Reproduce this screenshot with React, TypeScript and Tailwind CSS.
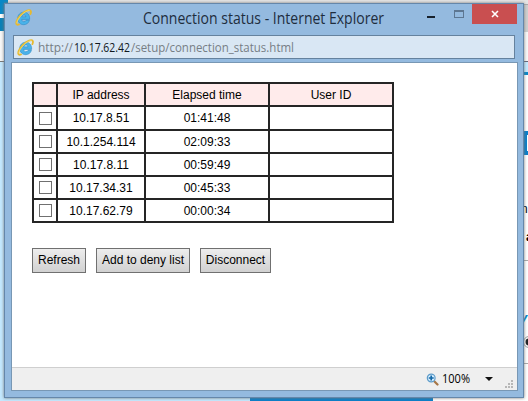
import React from "react";

const connections = [
  { ip: "10.17.8.51", time: "01:41:48" },
  { ip: "10.1.254.114", time: "02:09:33" },
  { ip: "10.17.8.11", time: "00:59:49" },
  { ip: "10.17.34.31", time: "00:45:33" },
  { ip: "10.17.62.79", time: "00:00:34" },
];

function IELogo({ size }: { size: number }) {
  return (
    <svg width={size} height={size} viewBox="0 0 18 18" fill="none" className="shrink-0">
      <path d="M15.300 12C14.500 14.800 12.200 16.600 9.300 16.600 5.500 16.600 2.800 13.800 2.800 10.100 2.800 6.300 5.600 3.400 9.300 3.400c4 0 6.500 3 6.200 7.600H7.100c.1 1.600 1 2.500 2.400 2.500 1.100 0 1.800-.5 2.200-1.500zM7.200 8.300h4.400C11.400 7 10.600 6.300 9.400 6.300 8.200 6.300 7.400 7.100 7.200 8.300z" fill="#49b3ea" stroke="#2a86c2" strokeWidth=".6" />
      <path d="M4.200 16.300C.7 17.800.400 14.400 3.300 9.800 6.600 4.600 13.400.2 16 1.400c1.200.6 1.100 2.200.3 4" stroke="#e6b92f" strokeWidth="1.900" strokeLinecap="round" />
      <path d="M2 15.200C1.800 13.500 3.600 10 7 6.300 10 3.300 13.500 1.500 15.400 1.600" stroke="#fbe98c" strokeWidth=".6" />
    </svg>
  );
}

function BackgroundPage() {
  return (
    <div className="flex h-full flex-col">
      <div className="flex h-[398px] justify-between bg-[#e5e5e5]">
        <div className="flex w-2 flex-col">
          <div className="h-3.5 bg-[#0788c8]" />
          <div className="h-1 bg-white" />
          <div className="h-[13px] bg-[#0880b8]" />
          <div className="h-[30px] bg-[#f8f8f8]" />
          <div className="h-px bg-[#777]" />
          <div className="grow bg-[#c4e9ff]" />
        </div>
        <div className="flex w-[5px] flex-col overflow-hidden text-[12px] leading-[14px]">
          <div className="h-1 bg-[#e5e5e5]" />
          <div className="h-px bg-[#aaa]" />
          <div className="h-[27px] bg-[#cfcfcf]" />
          <div className="h-[29px] bg-[#f8f8f8]" />
          <div className="h-px bg-[#667]" />
          <div className="h-[10px] bg-[#c4e9ff]" />
          <div className="h-[3px] bg-[#0788c8]" />
          <div className="h-14 bg-white" />
          <div className="flex h-6 justify-end bg-[#087fca] py-1"><div className="w-px bg-white" /></div>
          <div className="h-[106px] border-b border-[#aaa] bg-white pt-[47px]">
            <div className="-ml-0.5 h-7 font-['Liberation_Sans',sans-serif]">n</div>
            <div className="pl-[3px] font-['Liberation_Sans',sans-serif] font-bold">a</div>
          </div>
          <div className="h-[103px] border-b border-[#aaa] bg-white pt-[50px]">
            <div className="-ml-1 h-[25px] font-['Liberation_Sans',sans-serif] text-[15px] font-bold italic text-[#0788c8]">y</div>
            <svg width="5" height="12" viewBox="0 0 5 12"><circle cx="6" cy="6" r="5.500" fill="white" stroke="#999" /><circle cx="6" cy="6" r="3.500" fill="#222" /></svg>
          </div>
          <div className="grow bg-white" />
        </div>
      </div>
      <div className="flex grow">
        <div className="w-[250px] bg-[#c4e9ff]" />
        <div className="w-[183px] bg-[#087fca]" />
        <div className="grow bg-white" />
      </div>
    </div>
  );
}

function TitleBar() {
  return (
    <div className="flex h-[31px] items-start">
      <div className="ml-2.5 mt-[5px]"><IELogo size={17} /></div>
      <h1 className="ml-[111px] mt-[5px] w-[258px] whitespace-nowrap font-['Open_Sans',sans-serif] text-[15.5px] leading-5 text-[#1e2d3d]">
        <svg width="258" height="20" className="block overflow-visible">
          <text x="0" y="15" textLength="241" lengthAdjust="spacingAndGlyphs" fill="currentColor">Connection status - Internet Explorer</text>
        </svg>
      </h1>
      <button aria-label="Minimize" className="ml-[26px] mt-3 h-0.5 w-2 bg-[#17212c]" />
      <button aria-label="Maximize" className="ml-[19px] mt-1.5 h-2 w-2.5 border border-t-2 border-[#5d7792]" />
      <button aria-label="Close" className="ml-2 flex h-5 w-[45px] items-center justify-center bg-[#c94f50]">
        <svg width="8" height="8" viewBox="0 0 8 8" stroke="white" strokeWidth="1.600"><path d="M1 1l6 6M7 1L1 7" /></svg>
      </button>
    </div>
  );
}

function AddressBar() {
  return (
    <div className="ml-2 flex h-6 w-[502px] items-center border border-[#65829e] bg-[#d9e7f4] pl-[3px]">
      <IELogo size={17} />
      <svg width="258" height="20" className="ml-1 overflow-visible font-['Open_Sans',sans-serif] text-[12.5px]">
        <text x="0" y="15" textLength="35" lengthAdjust="spacingAndGlyphs" fill="#777e85">http://</text>
        <text x="36" y="15" textLength="56" lengthAdjust="spacingAndGlyphs" fill="#101820">10.17.62.42</text>
        <text x="93" y="15" textLength="163" lengthAdjust="spacingAndGlyphs" fill="#777e85">/setup/connection_status.html</text>
      </svg>
    </div>
  );
}

function Cell({ children, header = false }: { children?: React.ReactNode; header?: boolean }) {
  return <div className={`flex items-center justify-center ${header ? "bg-[#ffebeb]" : "bg-white"}`}>{children}</div>;
}

function ActionButton({ children, width }: { children: React.ReactNode; width: string }) {
  return <button className={`${width} h-[25px] whitespace-nowrap border border-[#707070] bg-linear-to-b from-[#ededed] to-[#d1d1d1] pb-px`}>{children}</button>;
}

function StatusBar() {
  return (
    <div className="flex h-[23px] items-center border-t border-[#cfcfcf] bg-[#efefef] pl-[414px] font-['Open_Sans',sans-serif] text-[11px] text-black">
      <svg width="13" height="13" viewBox="0 0 13 13">
        <path d="M8 8l3.500 3.500" stroke="#a77646" strokeWidth="2.200" strokeLinecap="round" />
        <circle cx="5.200" cy="5" r="3.900" fill="#d8efff" stroke="#5d9bc9" strokeWidth="1.200" />
        <path d="M5.200 2.500v5M2.700 5h5" stroke="#1468a7" strokeWidth="1.700" />
      </svg>
      <svg width="29" height="16" className="ml-[3px] text-[12px]"><text x="0" y="12" textLength="28" lengthAdjust="spacingAndGlyphs">100%</text></svg>
      <svg width="8" height="4" viewBox="0 0 8 4" className="ml-3.5"><path d="M0 0h8L4 4z" fill="#111" /></svg>
      <svg width="9" height="9" viewBox="0 0 9 9" className="ml-3 mt-3 self-start" fill="#b7b7b7">
        <path d="M6 0h2v2H6zM3 3h2v2H3zM6 3h2v2H6zM0 6h2v2H0zM3 6h2v2H3zM6 6h2v2H6z" />
      </svg>
    </div>
  );
}

export default function App() {
  return (
    <main className="relative h-[401px] w-[528px] overflow-hidden bg-white">
      <BackgroundPage />
      <section className="absolute left-1 top-[3px] h-[395px] w-[520px] border border-[#6587aa] bg-[#94badf] shadow-[0_0_3px_#777]">
        <TitleBar />
        <AddressBar />
        <div className="ml-1.5 mt-[3px] flex h-[329px] w-[507px] flex-col border border-[#7897b4] bg-white font-['Liberation_Sans',sans-serif] text-[12px] leading-4 text-black">
          <div className="grow pl-5 pt-[19px]">
            <div className="grid w-[362px] grid-cols-[22px_86px_122px_122px] grid-rows-[21px_22px_21px_21px_21px_21px] gap-0.5 bg-[#252525] p-0.5">
              <Cell header />
              <Cell header>IP address</Cell>
              <Cell header>Elapsed time</Cell>
              <Cell header>User ID</Cell>
              {connections.map(({ ip, time }) => (
                <React.Fragment key={ip}>
                  <Cell><input type="checkbox" aria-label={ip} className="size-[13px] appearance-none border border-[#707070] bg-white" /></Cell>
                  <Cell>{ip}</Cell>
                  <Cell>{time}</Cell>
                  <Cell />
                </React.Fragment>
              ))}
            </div>
            <div className="mt-[25px] flex gap-2.5">
              <ActionButton width="w-[54px]">Refresh</ActionButton>
              <ActionButton width="w-[94px]">Add to deny list</ActionButton>
              <ActionButton width="w-[71px]">Disconnect</ActionButton>
            </div>
          </div>
          <StatusBar />
        </div>
      </section>
    </main>
  );
}
